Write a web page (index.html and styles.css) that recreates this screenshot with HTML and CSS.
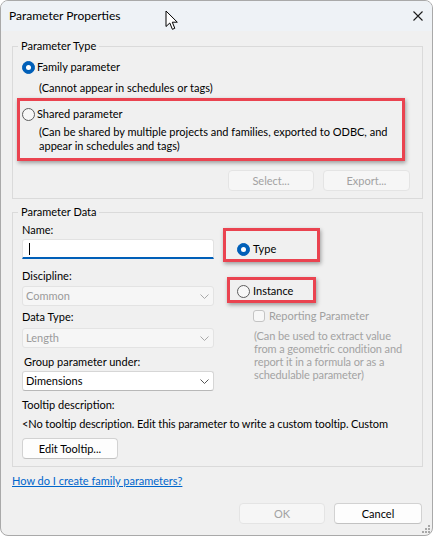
FILE: index.html
```html
<!DOCTYPE html>
<html lang="en">
<head>
    <meta charset="UTF-8">
    <meta name="viewport" content="width=device-width, initial-scale=1.0">
    <title>Parameter Properties</title>
    <link rel="stylesheet" href="styles.css">
</head>
<body>
    <div class="window">
        <div class="titlebar">
            <span class="title">Parameter Properties</span>
            <svg class="close" width="10" height="10" viewBox="0 0 10 10">
                <path d="M0.5 0.5 L9.5 9.5 M9.5 0.5 L0.5 9.5" stroke="#1b1b1b" stroke-width="1.1" fill="none"/>
            </svg>
        </div>

        <div class="content">
            <fieldset class="group group-type">
                <legend>Parameter Type</legend>
                <div class="option">
                    <span class="radio checked"></span>
                    <span>Family parameter</span>
                </div>
                <p class="note">(Cannot appear in schedules or tags)</p>

                <div class="highlight shared">
                    <div class="option">
                        <span class="radio"></span>
                        <span>Shared parameter</span>
                    </div>
                    <p class="note note-multi">(Can be shared by multiple projects and families, exported to ODBC, and<br>appear in schedules and tags)</p>
                </div>

                <div class="button-row">
                    <button class="btn btn-select" disabled>Select...</button>
                    <button class="btn btn-export" disabled>Export...</button>
                </div>
            </fieldset>

            <fieldset class="group group-data">
                <legend>Parameter Data</legend>
                <div class="data-grid">
                    <div class="data-left">
                        <div class="label">Name:</div>
                        <div class="text-input"><span class="caret"></span></div>

                        <div class="label label-discipline">Discipline:</div>
                        <div class="select disabled">
                            <span>Common</span>
                            <svg width="9" height="5" viewBox="0 0 9 5"><polyline points="0.5,0.5 4.5,4.5 8.5,0.5" fill="none" stroke="#a8a8a8"/></svg>
                        </div>

                        <div class="label label-datatype">Data Type:</div>
                        <div class="select disabled select-datatype">
                            <span>Length</span>
                            <svg width="9" height="5" viewBox="0 0 9 5"><polyline points="0.5,0.5 4.5,4.5 8.5,0.5" fill="none" stroke="#a8a8a8"/></svg>
                        </div>

                        <div class="label label-group">Group parameter under:</div>
                        <div class="select select-group">
                            <span>Dimensions</span>
                            <svg width="9" height="5" viewBox="0 0 9 5"><polyline points="0.5,0.5 4.5,4.5 8.5,0.5" fill="none" stroke="#555"/></svg>
                        </div>
                    </div>

                    <div class="data-right">
                        <div class="highlight type-box">
                            <div class="option">
                                <span class="radio checked"></span>
                                <span>Type</span>
                            </div>
                        </div>
                        <div class="highlight instance-box">
                            <div class="option">
                                <span class="radio"></span>
                                <span>Instance</span>
                            </div>
                        </div>
                        <div class="checkbox-row">
                            <span class="checkbox"></span>
                            <span>Reporting Parameter</span>
                        </div>
                        <p class="reporting-note">(Can be used to extract value<br>from a geometric condition and<br>report it in a formula or as a<br>schedulable parameter)</p>
                    </div>
                </div>

                <div class="label label-tooltip">Tooltip description:</div>
                <div class="tooltip-text">&lt;No tooltip description. Edit this parameter to write a custom tooltip. Custom</div>
                <button class="btn btn-tooltip">Edit Tooltip...</button>
            </fieldset>

            <a class="help-link" href="#">How do I create family parameters?</a>

            <div class="dialog-buttons">
                <button class="btn btn-ok" disabled>OK</button>
                <button class="btn btn-cancel">Cancel</button>
            </div>
        </div>

        <!-- mouse pointer over the title bar -->
        <svg class="pointer" width="14" height="21" viewBox="0 0 14 21">
            <path d="M1 1 V16.5 L4.8 13 L7.4 19.3 L9.8 18.3 L7.3 12.2 H12.3 Z" fill="#fff" stroke="#000" stroke-width="1" stroke-linejoin="round"/>
        </svg>

        <svg class="grip" width="10" height="10" viewBox="0 0 10 10" fill="#a8a8a8">
            <rect x="7" y="1" width="2" height="2"/>
            <rect x="4" y="4" width="2" height="2"/>
            <rect x="7" y="4" width="2" height="2"/>
            <rect x="1" y="7" width="2" height="2"/>
            <rect x="4" y="7" width="2" height="2"/>
            <rect x="7" y="7" width="2" height="2"/>
        </svg>
    </div>
</body>
</html>
```

FILE: styles.css
```css
* {
    box-sizing: border-box;
}

body {
    margin: 0;
    background-color: #fff;
    font-family: Lato, "Noto Sans", sans-serif;
    font-size: 11px;
    line-height: 16px;
    color: #000;
}

.window {
    position: relative;
    width: 433px;
    height: 536px;
    border: 1px solid #a9a9a9;
    border-radius: 8px;
    background-color: #f0f0f0;
    overflow: hidden;
}

.titlebar {
    height: 30px;
    background-color: #eef2f6;
    display: flex;
    align-items: center;
    justify-content: space-between;
    padding: 0 9px 0 8px;
    font-size: 12px;
}

.content {
    padding: 0 9px 0 11px;
}

.group {
    margin: 0;
    border: 1px solid #dadada;
    min-width: 0;
}

.group legend {
    padding: 0 3px;
    margin-left: -4px;
    line-height: 16px;
}

.group-type {
    margin-top: 7px;
    padding: 5px 12px 7px 9px;
}

.group-data {
    margin-top: 5px;
    padding: 2px 11px 7px 9px;
}

p {
    margin: 0;
}

.option {
    display: flex;
    align-items: center;
    height: 16px;
}

.radio {
    flex: none;
    position: relative;
    width: 13px;
    height: 13px;
    margin-right: 2px;
    border: 1px solid #5c5c5c;
    border-radius: 50%;
    background-color: #f7f7f7;
}

.radio.checked {
    border-color: #005fb8;
    background-color: #005fb8;
}

.radio.checked::after {
    content: "";
    position: absolute;
    left: 3px;
    top: 3px;
    width: 5px;
    height: 5px;
    border-radius: 50%;
    background-color: #fff;
}

.note {
    margin: 5px 0 0 17px;
}

.note-multi {
    margin-top: 3px;
    line-height: 14px;
}

.highlight {
    border: 3px solid #ea4350;
    box-shadow: 1px 2px 4px rgba(0, 0, 0, 0.35);
}

.shared {
    width: 388px;
    margin: 2px 0 0 -5px;
    padding: 5px 2px;
}

.button-row {
    display: flex;
    justify-content: flex-end;
    gap: 9px;
    margin-top: 9px;
}

.btn {
    height: 21px;
    padding: 0;
    font-family: inherit;
    font-size: 11px;
    color: #000;
    background-color: #fdfdfd;
    border: 1px solid #d2d2d2;
    border-bottom-color: #c2c2c2;
    border-radius: 4px;
}

.btn:disabled {
    color: #a2a2a2;
    background-color: #f6f6f6;
    border-color: #e4e4e4;
}

.btn-select {
    width: 86px;
}

.btn-export {
    width: 87px;
}

.data-grid {
    display: grid;
    grid-template-columns: 192px 1fr;
    column-gap: 9px;
}

.label {
    height: 16px;
}

.text-input {
    display: flex;
    align-items: center;
    height: 20px;
    margin-top: 1px;
    padding-left: 6px;
    background-color: #fff;
    border: 1px solid #e2e2e2;
    border-bottom: 2px solid #005fb8;
    border-radius: 3px 3px 0 0;
}

.caret {
    width: 1px;
    height: 12px;
    background-color: #000;
}

.label-discipline {
    margin-top: 9px;
}

.label-datatype {
    margin-top: 3px;
}

.label-group {
    margin-top: 6px;
    padding-left: 2px;
}

.select {
    display: flex;
    align-items: center;
    justify-content: space-between;
    height: 20px;
    margin-top: 2px;
    padding: 0 4px 0 3px;
    background-color: #fff;
    border: 1px solid #d6d6d6;
    border-bottom-color: #b8b8b8;
    border-radius: 3px;
}

.select.disabled {
    color: #9b9b9b;
    background-color: #f6f6f6;
    border-color: #e3e3e3;
}

.select-datatype {
    margin-top: 3px;
}

.select-group {
    margin-top: 1px;
}

.type-box {
    width: 97px;
    height: 34px;
    margin-top: 6px;
    padding: 10px 0 0 11px;
}

.instance-box {
    width: 89px;
    height: 26px;
    margin: 15px 0 0 4px;
    padding: 3px 0 0 7px;
}

.type-box .radio,
.instance-box .radio {
    margin-right: 3px;
}

.checkbox-row {
    display: flex;
    align-items: center;
    height: 16px;
    margin: 5px 0 0 30px;
    color: #a0a0a0;
}

.checkbox {
    width: 12px;
    height: 12px;
    margin-right: 4px;
    border: 1px solid #c4c4c4;
    border-radius: 3px;
    background-color: #f7f7f7;
}

.reporting-note {
    margin: 5px 0 0 31px;
    line-height: 13px;
    letter-spacing: -0.1px;
    color: #a3a3a3;
}

.label-tooltip {
    margin-top: 6px;
}

.tooltip-text {
    margin-top: 3px;
    white-space: nowrap;
    overflow: hidden;
    letter-spacing: -0.09px;
}

.btn-tooltip {
    display: block;
    width: 96px;
    margin-top: 6px;
}

.help-link {
    display: block;
    width: max-content;
    margin-top: 6px;
    color: #0066cc;
    text-decoration: underline;
}

.dialog-buttons {
    display: flex;
    justify-content: flex-end;
    gap: 9px;
    margin: 14px 1px 0 0;
}

.btn-ok {
    width: 86px;
}

.btn-cancel {
    width: 88px;
}

.pointer {
    position: absolute;
    left: 164px;
    top: 9px;
}

.grip {
    position: absolute;
    right: 1px;
    bottom: 1px;
}
```
